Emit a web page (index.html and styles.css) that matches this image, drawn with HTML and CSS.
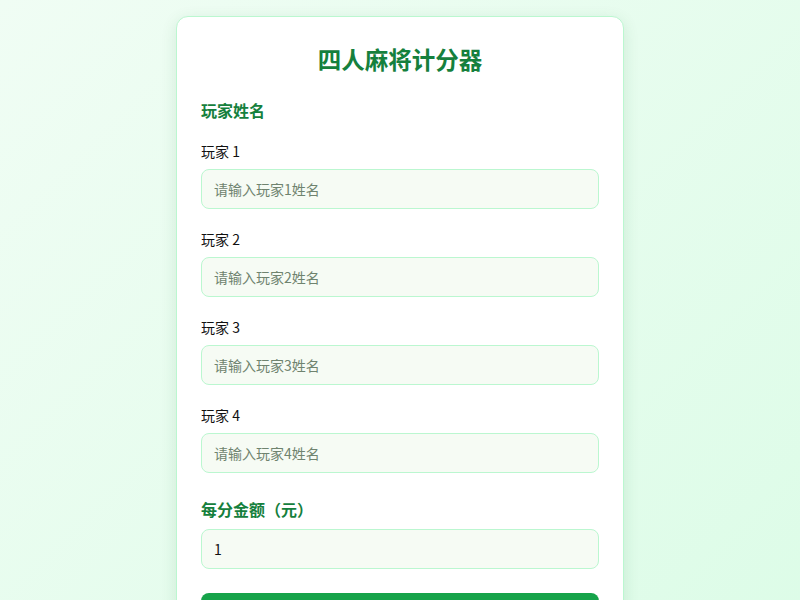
FILE: index.html
```html
<!DOCTYPE html>
<html lang="zh-CN">
<head>
    <meta charset="UTF-8">
    <meta name="viewport" content="width=device-width, initial-scale=1.0">
    <title>四人麻将计分器</title>
    <link rel="stylesheet" href="styles.css">
</head>
<body>

    <div class="container">
        <h1>四人麻将计分器</h1>

        <div class="section">
            <h2 class="players-title">玩家姓名</h2>

            <div class="field">
                <label for="p1">玩家 1</label>
                <input type="text" id="p1" placeholder="请输入玩家1姓名">
            </div>
            <div class="field">
                <label for="p2">玩家 2</label>
                <input type="text" id="p2" placeholder="请输入玩家2姓名">
            </div>
            <div class="field">
                <label for="p3">玩家 3</label>
                <input type="text" id="p3" placeholder="请输入玩家3姓名">
            </div>
            <div class="field">
                <label for="p4">玩家 4</label>
                <input type="text" id="p4" placeholder="请输入玩家4姓名">
            </div>
        </div>

        <div class="section">
            <h2>每分金额（元）</h2>
            <input type="number" id="rate" value="1">
        </div>

        <button type="button">开始计分</button>
    </div>

</body>
</html>
```

FILE: styles.css
```css
* {
    box-sizing: border-box;
}

body {
    font-family: "Noto Sans CJK SC", sans-serif;
    background: linear-gradient(135deg, #f0fdf4 0%, #dcfce7 100%);
    min-height: 100vh;
    margin: 0;
    padding: 16px;
    color: #111;
}

.container {
    background-color: white;
    width: 448px;
    margin: 0 auto;
    padding: 24px;
    border: 1px solid #bbf7d0;
    border-radius: 12px;
    box-shadow: 0 4px 16px rgba(22, 101, 52, 0.12);
}

h1 {
    font-size: 23.5px;
    line-height: 36px;
    color: #15803d;
    text-align: center;
    margin: 0 0 21px;
}

h2 {
    font-size: 16px;
    line-height: 24px;
    color: #15803d;
    margin: 0 0 8px;
}

.players-title {
    margin-bottom: 19px;
}

.section {
    margin-bottom: 24px;
}

.field {
    margin-bottom: 20px;
}

.field:last-child {
    margin-bottom: 0;
}

label {
    display: block;
    font-size: 14px;
    line-height: 20px;
    margin-bottom: 8px;
}

input {
    display: block;
    width: 100%;
    height: 40px;
    padding: 0 12px;
    font-family: inherit;
    font-size: 14px;
    color: #111;
    background-color: #f6fbf4;
    border: 1px solid #bbf7d0;
    border-radius: 8px;
    outline: none;
}

input::placeholder {
    color: #6f836f;
}

button {
    width: 100%;
    height: 44px;
    background-color: #16a34a;
    color: white;
    border: none;
    border-radius: 8px;
    font-family: inherit;
    font-size: 16px;
    font-weight: bold;
    cursor: pointer;
}
```
